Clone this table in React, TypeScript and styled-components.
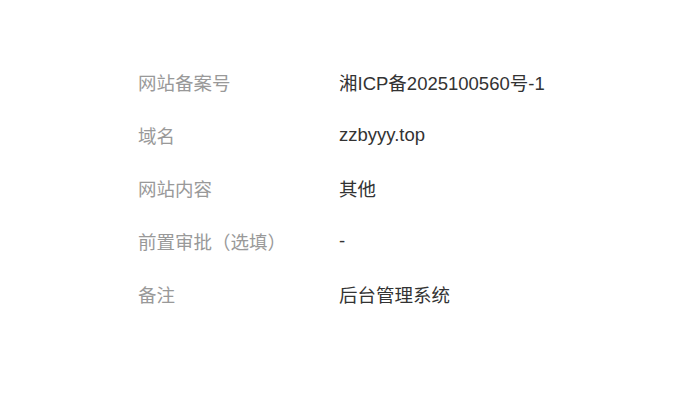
import styled, { createGlobalStyle } from "styled-components";

const GlobalStyle = createGlobalStyle`
  html, body {
    margin: 0;
    padding: 0;
    background: #fff;
  }
  body {
    font-family: "Liberation Sans", Arial, "Noto Sans CJK SC", sans-serif;
  }
`;

const Page = styled.div`
  width: 676px;
  height: 414px;
  box-sizing: border-box;
  padding: 55px 0 0 138px;
`;

const InfoList = styled.dl`
  margin: 0;
  display: flex;
  flex-direction: column;
`;

const Row = styled.div`
  display: grid;
  grid-template-columns: 201px auto;
  align-items: center;
  height: 53.2px;
  font-size: 18.5px;
`;

const Label = styled.dt`
  margin: 0;
  color: #999;
`;

const Value = styled.dd`
  margin: 0;
  color: #333;
`;

const rows: [string, string][] = [
  ["网站备案号", "湘ICP备2025100560号-1"],
  ["域名", "zzbyyy.top"],
  ["网站内容", "其他"],
  ["前置审批（选填）", "-"],
  ["备注", "后台管理系统"],
];

const App = () => {
  return <>
    <GlobalStyle />
    <Page>
      <InfoList>
        {rows.map(([k, v]) => (
          <Row key={k}>
            <Label>{k}</Label>
            <Value>{v}</Value>
          </Row>
        ))}
      </InfoList>
    </Page>
  </>;
};

export default App;
